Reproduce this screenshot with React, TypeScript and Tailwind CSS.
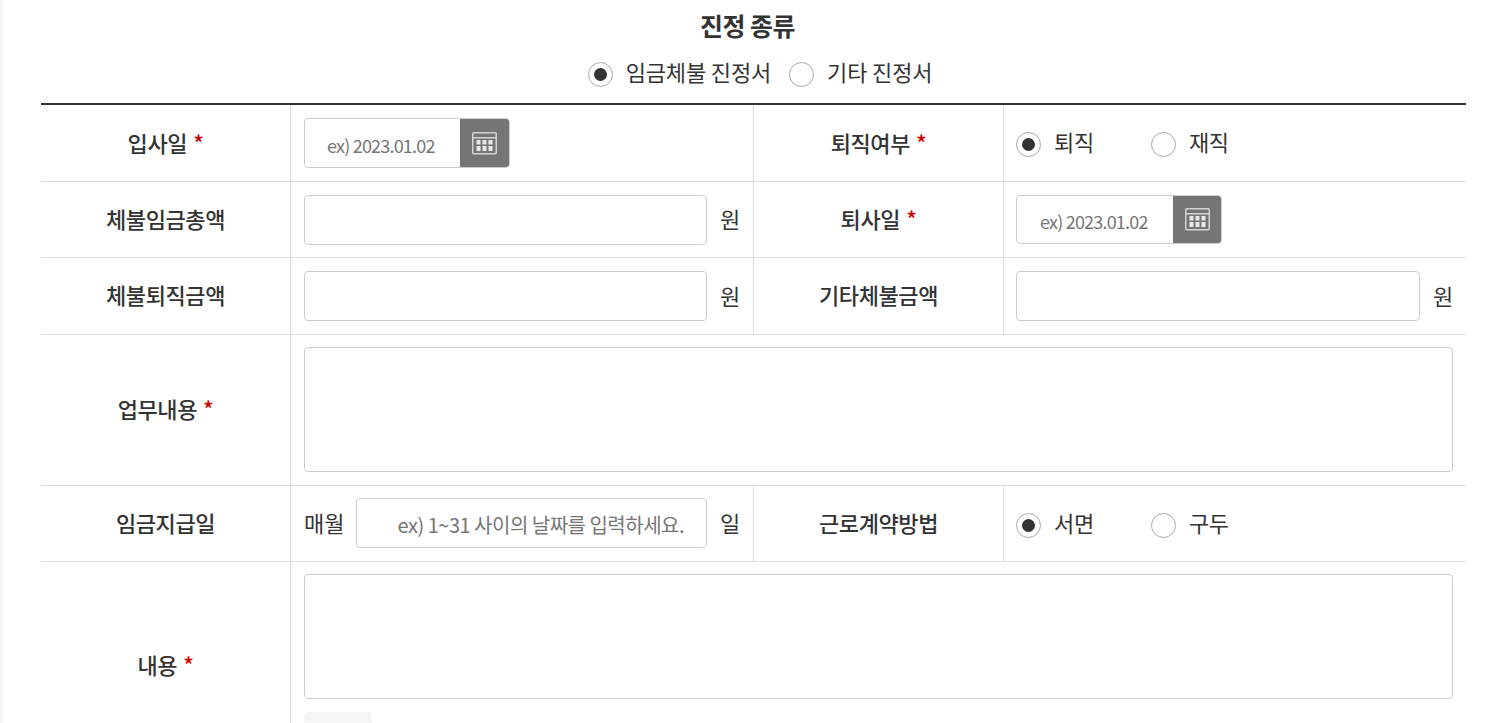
import type { ReactNode } from 'react';

const fontStack = "font-['Noto_Sans_CJK_KR','Noto_Sans',sans-serif]";

function Radio({ checked, label, spacing = 'tracking-[-0.3px]' }: { checked?: boolean; label: string; spacing?: string }) {
  return (
    <label className="flex items-center gap-[13px]">
      <span className="w-[25px] h-[25px] rounded-full border border-[#aaaaaa] bg-white flex items-center justify-center">
        {checked && <span className="w-[13px] h-[13px] rounded-full bg-[#333333]" />}
      </span>
      <span className={`text-[22px] leading-none ${spacing} text-[#333333] -mt-[7px]`}>{label}</span>
    </label>
  );
}

function Label({ text, required, w = 'w-[249px]', className = '' }: { text: string; required?: boolean; w?: string; className?: string }) {
  return (
    <div className={`${w} shrink-0 flex items-center justify-center text-[22px] font-medium tracking-[-0.4px] text-[#333333] ${className}`}>
      <span className="-mt-[2px]">{text}</span>
      {required && <span className="text-[#d00000] ml-[6px] -mt-[2px]">*</span>}
    </div>
  );
}

function CalendarIcon() {
  return (
    <svg width="25" height="23" viewBox="0 0 25 23" fill="none">
      <rect x="0.75" y="0.75" width="23.5" height="21" rx="1" stroke="#d4d4d4" strokeWidth="1.5" />
      <path d="M1 5.75H24" stroke="#d4d4d4" strokeWidth="1.5" />
      <path d="M4.5 8h4v4.5h-4zM10.5 8h4v4.5h-4zM16.5 8h4v4.5h-4zM4.5 14h4v5h-4zM10.5 14h4v5h-4zM16.5 14h4v5h-4z" fill="#e8e8e8" />
    </svg>
  );
}

function DateInput({ size = 'w-[206px] h-[50px]', pad = 'pl-[22px]', btn = 'w-[49px]' }: { size?: string; pad?: string; btn?: string }) {
  return (
    <div className={`${size} border border-[#cccccc] rounded-[4px] flex overflow-hidden`}>
      <div className={`flex-1 ${pad} pt-[5px] flex items-center text-[18px] tracking-[-0.8px] text-[#757575]`}>ex) 2023.01.02</div>
      <div className={`${btn} bg-[#757575] flex items-center justify-center`}>
        <CalendarIcon />
      </div>
    </div>
  );
}

function Box({ children }: { children?: ReactNode }) {
  return <div className="flex-1 h-[50px] border border-[#cccccc] rounded-[4px] bg-white flex items-center">{children}</div>;
}

function Unit({ text }: { text: string }) {
  return <span className="ml-[13px] w-[20px] text-[22px] tracking-[-0.1px] text-[#333333] whitespace-nowrap -mt-[2px]">{text}</span>;
}

function Cell({ className = '', children }: { className?: string; children?: ReactNode }) {
  return <div className={`border-l border-[#dddddd] flex items-center pl-[13px] pr-[13px] ${className}`}>{children}</div>;
}

function RightCell({ className = '', children }: { className?: string; children?: ReactNode }) {
  return <div className={`border-l border-[#dddddd] flex items-center pl-[12px] pr-[13px] flex-1 ${className}`}>{children}</div>;
}

function Row({ h, last, children }: { h: string; last?: boolean; children: ReactNode }) {
  return <div className={`flex ${h} ${last ? '' : 'border-b border-[#dddddd]'}`}>{children}</div>;
}

export default function App() {
  return (
    <div className={`h-[723px] overflow-hidden bg-white ${fontStack} border-l-[3px] border-[#f5f5f5]`}>
      <div className="ml-[38px] w-[1425px]">
        <h3 className="pt-[8px] pr-[12px] h-[50px] text-center text-[25px] leading-[34px] font-bold tracking-[-0.5px] text-[#333333]">진정 종류</h3>
        <div className="flex justify-center items-start gap-[18px] h-[53px] pt-[12px] pl-[13px]">
          <Radio checked label="임금체불 진정서" spacing="tracking-[-0.15px]" />
          <Radio label="기타 진정서" spacing="tracking-[-0.15px]" />
        </div>

        <div className="border-t-2 border-[#333333]">
          <Row h="h-[77px]">
            <Label text="입사일" required />
            <Cell className="w-[463px]"><DateInput /></Cell>
            <Label text="퇴직여부" required w="w-[250px] border-l border-[#dddddd]" />
            <RightCell className="gap-[57px] pt-[3px]">
              <Radio checked label="퇴직" />
              <Radio label="재직" />
            </RightCell>
          </Row>
          <Row h="h-[76px]">
            <Label text="체불임금총액" />
            <Cell className="w-[463px]"><Box /><Unit text="원" /></Cell>
            <Label text="퇴사일" required w="w-[250px] border-l border-[#dddddd]" />
            <RightCell><DateInput size="w-[206px] h-[49px] -mt-[1px]" pad="pl-[23px]" btn="w-[48px]" /></RightCell>
          </Row>
          <Row h="h-[77px]">
            <Label text="체불퇴직금액" className="pb-[1px]" />
            <Cell className="w-[463px]"><Box /><Unit text="원" /></Cell>
            <Label text="기타체불금액" w="w-[250px] border-l border-[#dddddd]" className="pb-[1px]" />
            <RightCell><Box /><Unit text="원" /></RightCell>
          </Row>
          <Row h="h-[151px]">
            <Label text="업무내용" required className="pb-[2px]" />
            <Cell className="flex-1 items-start pt-[12px]">
              <div className="w-full h-[125px] border border-[#cccccc] rounded-[4px]" />
            </Cell>
          </Row>
          <Row h="h-[76px]">
            <Label text="임금지급일" />
            <Cell className="w-[463px] items-start pt-[12px]">
              <span className="self-center text-[22px] tracking-[-0.1px] text-[#333333] mr-[12px] whitespace-nowrap -mt-[14px]">매월</span>
              <Box>
                <span className="w-full text-right pr-[22px] pt-[3px] text-[20px] tracking-[-0.5px] text-[#757575] whitespace-nowrap">ex) 1~31 사이의 날짜를 입력하세요.</span>
              </Box>
              <span className="self-center ml-[13px] w-[20px] text-[22px] tracking-[-0.1px] text-[#333333] whitespace-nowrap -mt-[14px]">일</span>
            </Cell>
            <Label text="근로계약방법" w="w-[250px] border-l border-[#dddddd]" />
            <RightCell className="gap-[57px] pt-[3px]">
              <Radio checked label="서면" />
              <Radio label="구두" />
            </RightCell>
          </Row>
          <Row h="h-[206px]" last>
            <Label text="내용" required />
            <div className="flex-1 border-l border-[#dddddd] px-[13px] pt-[12px]">
              <div className="h-[125px] border border-[#cccccc] rounded-[4px]" />
              <div className="mt-[13px] w-[68px] h-[40px] rounded-[4px] bg-[#f5f5f5]" />
            </div>
          </Row>
        </div>
      </div>
    </div>
  );
}
